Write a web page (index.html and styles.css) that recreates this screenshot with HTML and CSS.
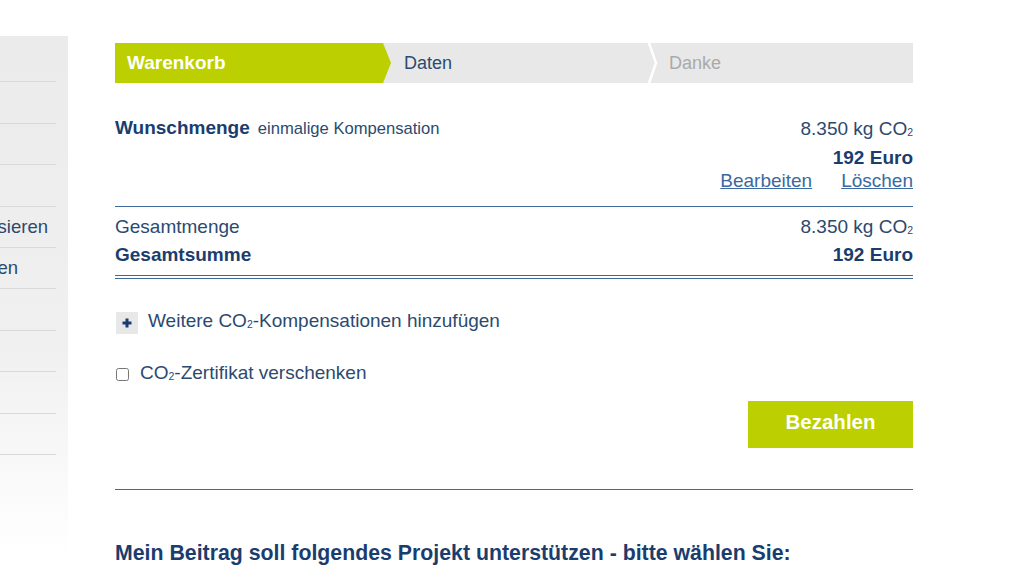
FILE: index.html
```html
<!DOCTYPE html>
<html lang="de">
<head>
<meta charset="utf-8">
<title>Warenkorb</title>
<link rel="stylesheet" href="styles.css">
</head>
<body>
<div class="page">
  <aside class="sidebar">
    <ul class="nav">
      <li></li>
      <li></li>
      <li></li>
      <li></li>
      <li class="pad-a">Emissionen kompensieren</li>
      <li class="pad-b">Projekte unterstützen</li>
      <li></li>
      <li></li>
      <li></li>
      <li></li>
    </ul>
  </aside>
  <main class="main">
    <div class="steps">
      <div class="step step-active">Warenkorb</div>
      <div class="step step-next">Daten</div>
      <svg class="sep" width="10" height="40" viewBox="0 0 10 40"><polyline points="1,0 8,20 1,40" fill="none" stroke="#ffffff" stroke-width="2.5"/></svg>
      <div class="step step-last">Danke</div>
    </div>

    <div class="item">
      <div class="item-title"><strong>Wunschmenge</strong><span class="item-sub">einmalige Kompensation</span></div>
      <div class="item-values">
        <div class="val">8.350 kg CO<sub>2</sub></div>
        <div class="val val-strong">192 Euro</div>
        <div class="links"><a href="#">Bearbeiten</a><a href="#">Löschen</a></div>
      </div>
    </div>

    <div class="totals">
      <div class="total-row"><span>Gesamtmenge</span><span>8.350 kg CO<sub>2</sub></span></div>
      <div class="total-row total-strong"><span>Gesamtsumme</span><span>192 Euro</span></div>
    </div>

    <div class="add-row">
      <span class="plus-box"><svg width="10" height="10" viewBox="0 0 10 10"><path d="M5 0.5V9.5M0.5 5H9.5" stroke="#1b3d6d" stroke-width="3"/></svg></span>
      <span>Weitere CO<sub>2</sub>-Kompensationen hinzufügen</span>
    </div>

    <label class="check-row"><input type="checkbox"><span>CO<sub>2</sub>-Zertifikat verschenken</span></label>

    <div class="pay-row"><button class="pay">Bezahlen</button></div>

    <hr class="divider">

    <h2 class="project-title">Mein Beitrag soll folgendes Projekt unterstützen - bitte wählen Sie:</h2>
  </main>
</div>
</body>
</html>
```

FILE: styles.css
```css
* { box-sizing: border-box; }
html, body { margin: 0; padding: 0; background: #ffffff; }
body {
  font-family: "Liberation Sans", Arial, sans-serif;
  color: #2c4a70;
  font-size: 19px;
  overflow: hidden;
  height: 576px;
}
sub { font-size: 0.55em; vertical-align: baseline; position: relative; top: 0.05em; }

.page { display: flex; gap: 47px; }

.sidebar {
  width: 68px;
  flex: none;
  margin-top: 36px;
  height: 520px;
  background: linear-gradient(#ebebeb 0%, #f0f0f0 60%, #ffffff 100%);
  overflow: hidden;
}
.nav {
  list-style: none;
  margin: 0 0 0 -344px;
  padding: 5px 0 0 0;
  width: 400px;
  font-size: 18.5px;
}
.nav li {
  height: 41.4px;
  border-bottom: 1px solid #d9d9d9;
  line-height: 40px;
  text-align: right;
  white-space: nowrap;
  color: #2c4a70;
}
.nav li.pad-a { padding-right: 8px; }
.nav li.pad-b { padding-right: 38px; }

.main { width: 798px; flex: none; padding-top: 43px; }

.steps {
  display: flex;
  height: 40px;
  background: #e8e8e8;
  align-items: center;
  font-size: 18px;
}
.step { height: 40px; line-height: 40px; }
.step-active {
  width: 276px;
  background: #bccf00;
  color: #ffffff;
  font-weight: bold;
  font-size: 19px;
  padding-left: 12px;
  clip-path: polygon(0 0, 268px 0, 276px 50%, 268px 100%, 0 100%);
}
.step-next { width: 257px; padding-left: 13px; color: #2c4a70; }
.sep { flex: none; display: block; }
.step-last { padding-left: 11px; color: #aaaaaa; }

.item {
  display: flex;
  justify-content: space-between;
  padding-top: 34px;
  padding-bottom: 14px;
  border-bottom: 1px solid #3d6a9b;
}
.item-title { line-height: 22px; }
.item-title strong { color: #1b3d6d; font-size: 19px; }
.item-sub { font-size: 16.6px; margin-left: 8px; }
.item-values { text-align: right; }
.val { line-height: 23px; }
.val-strong { font-weight: bold; color: #1b3d6d; margin-top: 3px; }
.links { display: flex; gap: 29px; line-height: 23px; }
.links a { color: #3a6aa0; text-decoration: underline; }

.totals { padding-top: 8px; padding-bottom: 9px; border-bottom: 4px double #3d6a9b; }
.total-row { display: flex; justify-content: space-between; line-height: 23px; }
.total-row + .total-row { margin-top: 2px; }
.total-strong { font-weight: bold; color: #1b3d6d; }

.add-row {
  display: flex;
  align-items: center;
  gap: 10px;
  margin-top: 31px;
  margin-left: 1px;
  line-height: 22px;
}
.plus-box {
  width: 22px;
  height: 22px;
  background: #e8e8e8;
  display: flex;
  align-items: center;
  justify-content: center;
}
.plus-box svg { display: block; }

.check-row {
  display: flex;
  align-items: center;
  gap: 11px;
  margin-top: 27px;
  margin-left: 1px;
  line-height: 22px;
}
.check-row input { margin: 0; width: 13px; height: 13px; }

.pay-row { display: flex; justify-content: flex-end; margin-top: 14px; }
.pay {
  width: 165px;
  height: 47px;
  background: #bccf00;
  border: none;
  color: #ffffff;
  font-family: "Liberation Sans", Arial, sans-serif;
  font-weight: bold;
  font-size: 20.5px;
  padding: 0 0 6px 0;
}

.divider { border: none; border-top: 1px solid #3d6a9b; margin: 41px 0 0 0; }

.project-title {
  margin: 51px 0 0 0;
  font-size: 21.3px;
  line-height: 24px;
  color: #1b3d6d;
  font-weight: bold;
}
```
